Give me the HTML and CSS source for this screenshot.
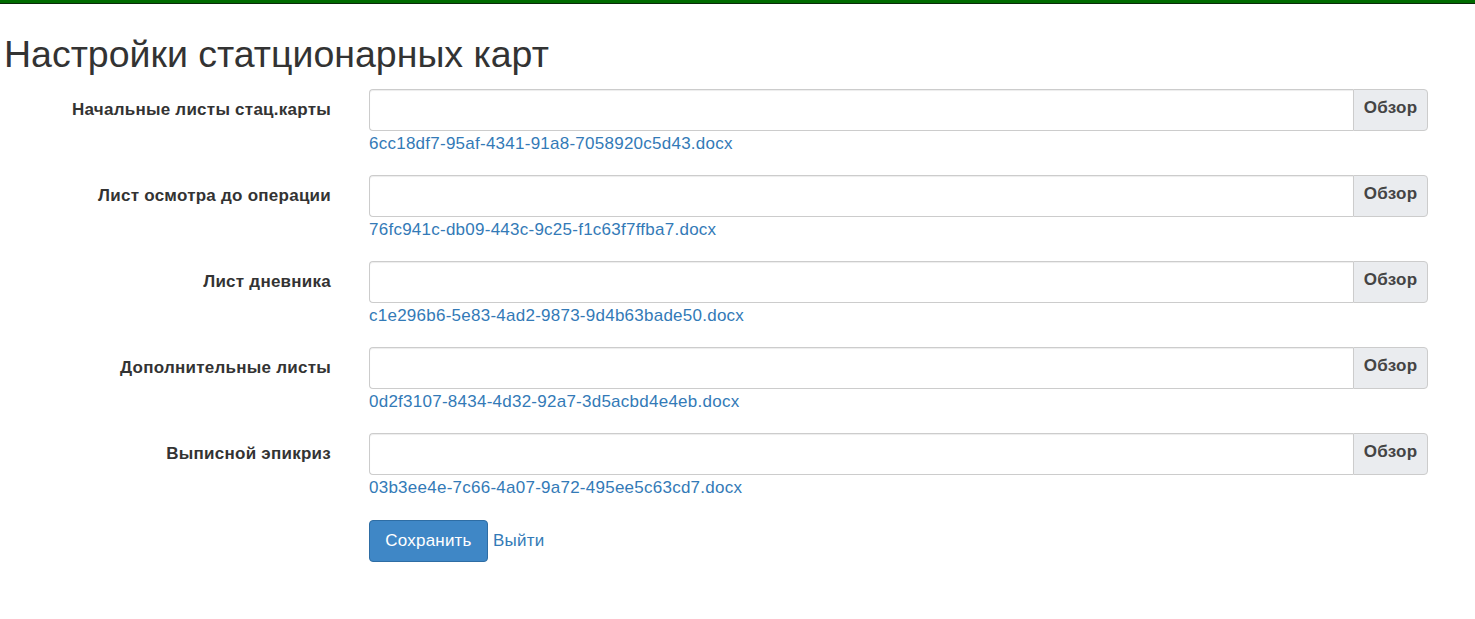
FILE: index.html
```html
<!DOCTYPE html>
<html>
<head>
  <title>Настройки статционарных карт</title>
  <link rel="stylesheet" href="styles.css">
</head>
<body>
  <div class="topbar"></div>
  <div class="content">
    <h1>Настройки статционарных карт</h1>
    <form class="form-horizontal">
      <div class="form-group">
        <label>Начальные листы стац.карты</label>
        <div class="field">
          <div class="input-group">
            <input type="text" class="form-control">
            <span class="addon">Обзор</span>
          </div>
          <a href="#" class="file-link">6cc18df7-95af-4341-91a8-7058920c5d43.docx</a>
        </div>
      </div>
      <div class="form-group">
        <label>Лист осмотра до операции</label>
        <div class="field">
          <div class="input-group">
            <input type="text" class="form-control">
            <span class="addon">Обзор</span>
          </div>
          <a href="#" class="file-link">76fc941c-db09-443c-9c25-f1c63f7ffba7.docx</a>
        </div>
      </div>
      <div class="form-group">
        <label>Лист дневника</label>
        <div class="field">
          <div class="input-group">
            <input type="text" class="form-control">
            <span class="addon">Обзор</span>
          </div>
          <a href="#" class="file-link">c1e296b6-5e83-4ad2-9873-9d4b63bade50.docx</a>
        </div>
      </div>
      <div class="form-group">
        <label>Дополнительные листы</label>
        <div class="field">
          <div class="input-group">
            <input type="text" class="form-control">
            <span class="addon">Обзор</span>
          </div>
          <a href="#" class="file-link">0d2f3107-8434-4d32-92a7-3d5acbd4e4eb.docx</a>
        </div>
      </div>
      <div class="form-group">
        <label>Выписной эпикриз</label>
        <div class="field">
          <div class="input-group">
            <input type="text" class="form-control">
            <span class="addon">Обзор</span>
          </div>
          <a href="#" class="file-link">03b3ee4e-7c66-4a07-9a72-495ee5c63cd7.docx</a>
        </div>
      </div>
      <div class="form-group">
        <label></label>
        <div class="field actions">
          <button type="button" class="btn">Сохранить</button>
          <a href="#" class="exit">Выйти</a>
        </div>
      </div>
    </form>
  </div>
</body>
</html>
```

FILE: styles.css
```css
/* Общие стили */
body {
  margin: 0;
  font-family: "Liberation Sans", Arial, sans-serif;
  font-size: 17px;
  letter-spacing: 0.25px;
  color: #333;
  background-color: #fff;
}

a {
  color: #337ab7;
  text-decoration: none;
}

.topbar {
  height: 3px;
  background-color: #006b00;
  border-bottom: 1px solid #0a2a0a;
}

.content {
  padding: 0 4px;
}

h1 {
  font-size: 37.5px;
  font-weight: normal;
  letter-spacing: 0;
  margin: 30px 0 14px;
  line-height: 1.1;
}

/* Форма */
.form-group {
  display: grid;
  grid-template-columns: 327px 1059px;
  column-gap: 38px;
  margin-bottom: 18px;
}

.form-group label {
  text-align: right;
  font-weight: bold;
  padding-top: 11px;
}

.input-group {
  display: flex;
  height: 42px;
}

.form-control {
  flex: 1;
  box-sizing: border-box;
  height: 42px;
  border: 1px solid #ccc;
  border-right: 0;
  border-radius: 4px 0 0 4px;
  box-shadow: inset 0 1px 1px rgba(0, 0, 0, 0.075);
  padding: 6px 12px;
  font-size: 16px;
  margin: 0;
}

.addon {
  box-sizing: border-box;
  width: 75px;
  height: 42px;
  background-color: #eaecef;
  border: 1px solid #ccc;
  border-radius: 0 4px 4px 0;
  font-weight: bold;
  text-align: center;
  padding-top: 8px;
  color: #444;
}

.file-link {
  display: block;
  line-height: 26px;
}

/* Кнопки */
.actions {
  display: flex;
  align-items: center;
  gap: 5px;
  padding-top: 1px;
}

.btn {
  background-color: #3f87c6;
  color: #fff;
  border: 1px solid #2e6da4;
  border-radius: 4px;
  height: 42px;
  width: 119px;
  font-family: "Liberation Sans", Arial, sans-serif;
  font-size: 17px;
  letter-spacing: 0.2px;
  cursor: pointer;
}
```
